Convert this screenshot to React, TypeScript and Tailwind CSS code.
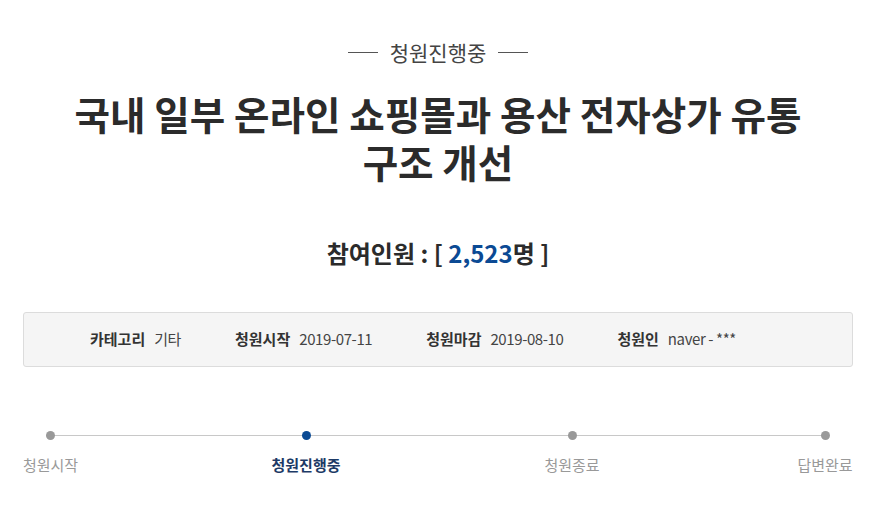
const FONT = { fontFamily: '"Noto Sans CJK KR", "Noto Sans", sans-serif' };

const INFO = [
  { label: "카테고리", value: "기타" },
  { label: "청원시작", value: "2019-07-11" },
  { label: "청원마감", value: "2019-08-10" },
  { label: "청원인", value: "naver - ***" },
];

const STEPS = [
  { label: "청원시작", active: false, w: "w-[53px]" },
  { label: "청원진행중", active: true, w: "w-[80px]" },
  { label: "청원종료", active: false, w: "w-[74px]" },
  { label: "답변완료", active: false, w: "w-[54px]" },
];

export default function App() {
  return (
    <div className="h-[513px] w-[876px] overflow-hidden bg-white text-[#333]" style={FONT}>
      {/* status */}
      <div className="flex items-center justify-center gap-[12px] pt-[37px]">
        <span className="h-px w-[30px] bg-[#555]" />
        <span className="text-[21px] leading-[30px] text-[#444]">청원진행중</span>
        <span className="h-px w-[30px] bg-[#555]" />
      </div>

      {/* title */}
      <h1 className="mt-[22px] text-center text-[38.6px] font-bold leading-[48px] text-[#2b2b2b]">
        국내 일부 온라인 쇼핑몰과 용산 전자상가 유통
        <br />
        구조 개선
      </h1>

      {/* count */}
      <p className="mt-[51px] text-center text-[24px] font-bold leading-[34px] text-[#2b2b2b]">
        참여인원 : [ <span className="text-[#0b4a94]">2,523</span>명 ]
      </p>

      {/* info box */}
      <div className="mx-[23px] mt-[42px] flex h-[55px] items-center gap-[54px] rounded-[3px] border border-[#dcdcdc] bg-[#f5f5f5] pl-[66px] text-[15px]">
        {INFO.map((i) => (
          <div key={i.label} className="flex items-center gap-[9px]">
            <span className="font-bold text-[#333]">{i.label}</span>
            <span className="tracking-[-0.4px] text-[#444]">{i.value}</span>
          </div>
        ))}
      </div>

      {/* progress */}
      <div className="relative mx-[24px] mt-[64px] flex justify-between">
        <div className="absolute left-[25px] right-[27px] top-[4px] h-px bg-[#c8c8c8]" />
        {STEPS.map((s) => (
          <div key={s.label} className={`relative flex flex-col items-center ${s.w}`}>
            <span className={`h-[9px] w-[9px] rounded-full ${s.active ? "bg-[#0b4a94]" : "bg-[#999]"}`} />
            <span
              className={`mt-[14px] whitespace-nowrap text-[15px] leading-[22px] ${s.active ? "font-bold text-[#1d3a66]" : "text-[#999]"}`}
            >
              {s.label}
            </span>
          </div>
        ))}
      </div>
    </div>
  );
}
